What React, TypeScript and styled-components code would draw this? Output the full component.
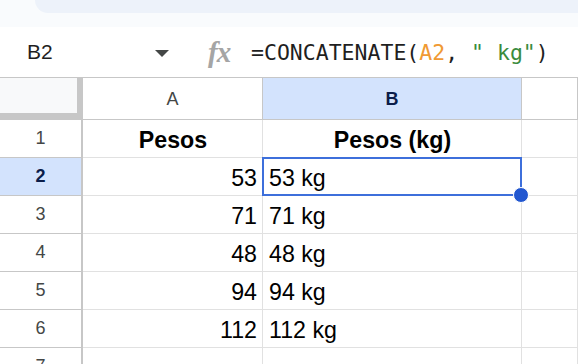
import styled, { createGlobalStyle } from "styled-components";

const GlobalStyle = createGlobalStyle`
  html, body {
    margin: 0;
    padding: 0;
    background: #ffffff;
  }
  * {
    box-sizing: border-box;
  }
`;

const Page = styled.div`
  width: 578px;
  height: 364px;
  overflow: hidden;
  font-family: "Liberation Sans", Arial, sans-serif;
  color: #000;
`;

const TopStrip = styled.div`
  height: 27px;
  background: #f9fbfd;
  padding-left: 35px;
`;

const Toolbar = styled.div`
  height: 13px;
  background: #edf2fa;
  border-bottom-left-radius: 22px;
`;

const FormulaBar = styled.div`
  height: 50px;
  display: flex;
  align-items: center;
  background: #ffffff;
`;

const NameBox = styled.div`
  width: 155px;
  padding-left: 27px;
  font-size: 21px;
  color: #1f1f1f;
`;

const Caret = styled.span`
  width: 0;
  height: 0;
  border-left: 7px solid transparent;
  border-right: 7px solid transparent;
  border-top: 7px solid #444746;
  margin-top: 2px;
`;

const FxIcon = styled.span`
  margin-left: 39px;
  width: 43px;
  font-family: "Liberation Serif", serif;
  font-style: italic;
  font-weight: bold;
  font-size: 29px;
  line-height: 1;
  color: #a5a5a5;
  letter-spacing: -1px;
`;

const Formula = styled.div`
  font-family: "DejaVu Sans Mono", "Liberation Mono", monospace;
  font-size: 21.5px;
  color: #1f1f1f;
  white-space: pre;
`;

const Ref = styled.span`
  color: #f09a33;
`;

const Str = styled.span`
  color: #3a8b3d;
`;

const Grid = styled.div`
  display: grid;
  grid-template-columns: 83px 180px 259px 1fr;
  grid-template-rows: 42px;
  grid-auto-rows: 38px;
  border-top: 1px solid #c7c7c7;
`;

const Corner = styled.div`
  background: #f8f9fa;
  border-right: 6px solid #c7c7c7;
  border-bottom: 7px solid #c7c7c7;
`;

const ColHeader = styled.div<{ $active?: boolean }>`
  display: flex;
  align-items: center;
  justify-content: center;
  padding-top: 1px;
  font-size: 18px;
  background: ${(p) => (p.$active ? "#d3e3fd" : "#ffffff")};
  color: ${(p) => (p.$active ? "#0b1d4a" : "#444746")};
  font-weight: ${(p) => (p.$active ? "bold" : "normal")};
  border-right: 1px solid #c7c7c7;
  border-bottom: 1px solid #c7c7c7;
`;

const RowHeader = styled.div<{ $active?: boolean }>`
  display: flex;
  align-items: center;
  justify-content: center;
  font-size: 18px;
  background: ${(p) => (p.$active ? "#d3e3fd" : "#ffffff")};
  color: ${(p) => (p.$active ? "#0b1d4a" : "#444746")};
  font-weight: ${(p) => (p.$active ? "bold" : "normal")};
  border-right: 2px solid #c7c7c7;
  border-bottom: 1px solid #c7c7c7;
`;

const Cell = styled.div<{
  $align?: "left" | "right" | "center";
  $bold?: boolean;
  $selected?: boolean;
}>`
  position: relative;
  z-index: ${(p) => (p.$selected ? 2 : 0)};
  display: flex;
  align-items: flex-end;
  justify-content: ${(p) =>
    p.$align === "right" ? "flex-end" : p.$align === "center" ? "center" : "flex-start"};
  padding: 0 5px 5px 6px;
  font-size: 23.2px;
  line-height: 1;
  font-weight: ${(p) => (p.$bold ? "bold" : "normal")};
  color: #000;
  border-right: 1px solid #e1e1e1;
  border-bottom: 1px solid #e1e1e1;
  white-space: nowrap;
`;

const Selection = styled.div`
  position: absolute;
  inset: -1px -1px -1px -1px;
  border: 2px solid #3d6fdb;
  pointer-events: none;
`;

const Handle = styled.div`
  position: absolute;
  right: -9px;
  bottom: -9px;
  width: 16px;
  height: 16px;
  border-radius: 50%;
  background: #2257d0;
  border: 1px solid #ffffff;
`;

const rows = [
  { n: 1, a: "Pesos", b: "Pesos (kg)", header: true },
  { n: 2, a: "53", b: "53 kg" },
  { n: 3, a: "71", b: "71 kg" },
  { n: 4, a: "48", b: "48 kg" },
  { n: 5, a: "94", b: "94 kg" },
  { n: 6, a: "112", b: "112 kg" },
  { n: 7, a: "", b: "" },
];

export default function App() {
  return (
    <Page>
      <GlobalStyle />
      <TopStrip>
        <Toolbar />
      </TopStrip>
      <FormulaBar>
        <NameBox>B2</NameBox>
        <Caret />
        <FxIcon>fx</FxIcon>
        <Formula>
          =CONCATENATE(<Ref>A2</Ref>, <Str>" kg"</Str>)
        </Formula>
      </FormulaBar>
      <Grid>
        <Corner />
        <ColHeader>A</ColHeader>
        <ColHeader $active>B</ColHeader>
        <ColHeader />
        {rows.map((r) => (
          <RowGroup key={r.n} row={r} />
        ))}
      </Grid>
    </Page>
  );
}

type Row = { n: number; a: string; b: string; header?: boolean };

function RowGroup({ row }: { row: Row }) {
  const selected = row.n === 2;
  return (
    <>
      <RowHeader $active={selected}>{row.n}</RowHeader>
      <Cell $align={row.header ? "center" : "right"} $bold={row.header}>
        {row.a}
      </Cell>
      <Cell
        $align={row.header ? "center" : "left"}
        $bold={row.header}
        $selected={selected}
      >
        {row.b}
        {selected && (
          <Selection>
            <Handle />
          </Selection>
        )}
      </Cell>
      <Cell />
    </>
  );
}
